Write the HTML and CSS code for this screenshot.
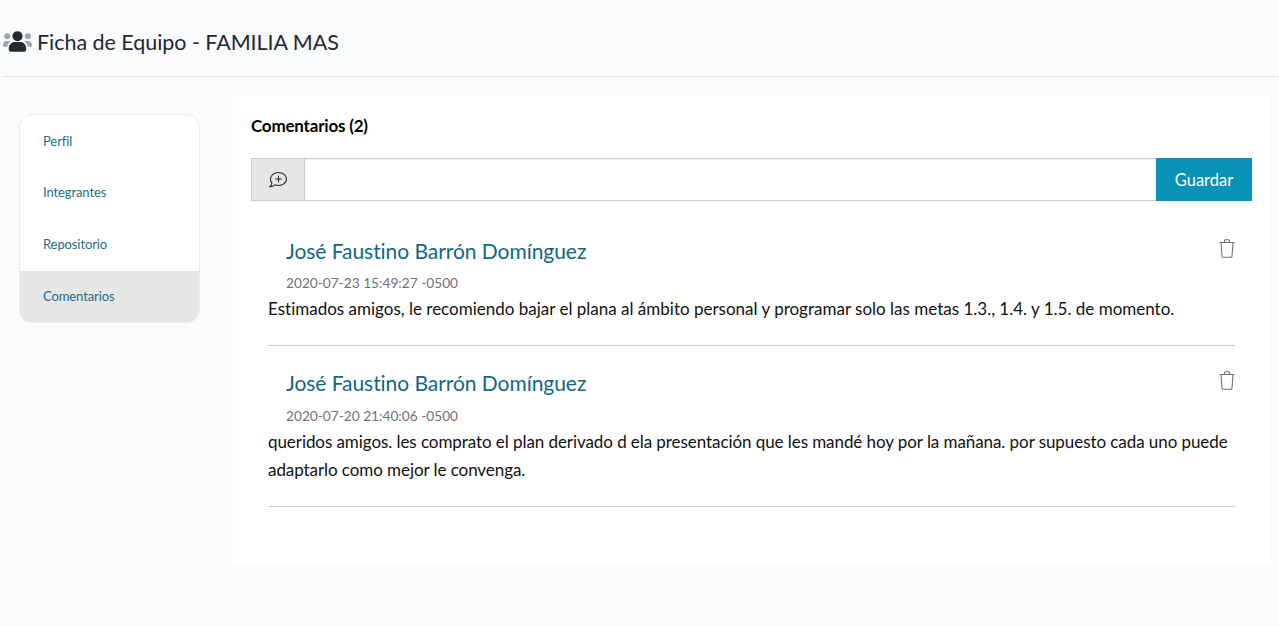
FILE: index.html
```html
<!DOCTYPE html>
<html lang="es">
<head>
<meta charset="utf-8">
<title>Ficha de Equipo</title>
<link rel="stylesheet" href="styles.css">
</head>
<body>
<header class="page-header">
  <svg class="team-icon" width="31" height="23" viewBox="0 0 32 23" aria-hidden="true">
    <g fill="#a3a5a8">
      <circle cx="5.300" cy="6" r="3.100"/>
      <circle cx="26.700" cy="6" r="3.100"/>
      <path d="M1 16c0-3 1.500-5 4-5h2.500c.6 0 1.200.2 1.700.5C6.900 12.800 5.600 14.800 5.400 17H2c-.6 0-1-.4-1-1z"/>
      <path transform="matrix(-1 0 0 1 32 0)" d="M1 16c0-3 1.500-5 4-5h2.500c.6 0 1.200.2 1.700.5C6.900 12.800 5.600 14.800 5.400 17H2c-.6 0-1-.4-1-1z"/>
    </g>
    <g fill="#24292f">
      <circle cx="16" cy="6" r="5.200"/>
      <path d="M7 19c0-4.500 3-7 6-7h6c3 0 6 2.500 6 7v1c0 1.100-.9 2-2 2H9c-1.100 0-2-.9-2-2z"/>
    </g>
  </svg>
  <h1 class="page-title">Ficha de Equipo - FAMILIA MAS</h1>
</header>
<div class="layout">
  <nav class="side-nav">
    <a class="side-link" href="#">Perfil</a>
    <a class="side-link" href="#">Integrantes</a>
    <a class="side-link" href="#">Repositorio</a>
    <a class="side-link active" href="#">Comentarios</a>
  </nav>
  <main class="panel">
    <h2 class="panel-title">Comentarios (2)</h2>
    <form class="comment-form">
      <span class="addon">
        <svg width="20" height="18" viewBox="0 0 20 18" fill="none" stroke="#24292f" stroke-width="1.100" aria-hidden="true">
          <path d="M10.500 1.500c4.400 0 8 2.900 8 6.500s-3.600 6.500-8 6.500c-1.300 0-2.500-.3-3.600-.7-1 .9-2.700 1.900-5 1.900 1.100-1 1.800-2.200 2-3.700C2.900 11.300 2.500 9.700 2.500 8c0-3.600 3.600-6.500 8-6.500z"/>
          <path d="M10.500 4.800v6.400M7.300 8h6.400"/>
        </svg>
      </span>
      <input class="comment-input" type="text" aria-label="Comentario">
      <button class="save-btn" type="button">Guardar</button>
    </form>
    <article class="comment">
      <div class="comment-head">
        <div>
          <h3 class="author">José Faustino Barrón Domínguez</h3>
          <div class="stamp">2020-07-23 15:49:27 -0500</div>
        </div>
        <svg class="trash" width="16" height="19" viewBox="0 0 16 19" fill="none" stroke="#6f7275" stroke-width="1.100" aria-hidden="true">
          <path d="M.5 3.500h15M5.500 3.500V1.700c0-.6.4-1 1-1h3c.6 0 1 .4 1 1v1.800M2 3.500l1 13.500c0 .8.600 1.300 1.300 1.300h7.400c.7 0 1.300-.5 1.300-1.300l1-13.500"/>
        </svg>
      </div>
      <p class="comment-body">Estimados amigos, le recomiendo bajar el plana al ámbito personal y programar solo las metas 1.3., 1.4. y 1.5. de momento.</p>
    </article>
    <article class="comment">
      <div class="comment-head">
        <div>
          <h3 class="author">José Faustino Barrón Domínguez</h3>
          <div class="stamp">2020-07-20 21:40:06 -0500</div>
        </div>
        <svg class="trash" width="16" height="19" viewBox="0 0 16 19" fill="none" stroke="#6f7275" stroke-width="1.100" aria-hidden="true">
          <path d="M.5 3.500h15M5.500 3.500V1.700c0-.6.4-1 1-1h3c.6 0 1 .4 1 1v1.800M2 3.500l1 13.500c0 .8.600 1.300 1.300 1.300h7.400c.7 0 1.300-.5 1.300-1.300l1-13.500"/>
        </svg>
      </div>
      <p class="comment-body comment-body-tight">queridos amigos. les comprato el plan derivado d ela presentación que les mandé hoy por la mañana. por supuesto cada uno puede adaptarlo como mejor le convenga.</p>
    </article>
  </main>
</div>
</body>
</html>
```
FILE: styles.css
```css
* { box-sizing: border-box; }
html, body { margin: 0; height: 100%; }
body {
  background: #f9fbfd;
  color: #111;
  font-family: "Lato", "Liberation Sans", sans-serif;
  font-variant-ligatures: none;
  overflow: hidden;
}
.page-header {
  display: flex;
  align-items: center;
  gap: 4px;
  height: 77px;
  margin-left: 3px;
  padding-top: 7px;
  border-bottom: 1px solid #e3e5e8;
}
.team-icon { flex: none; margin-left: -1px; }
.page-title {
  margin: 0;
  font-size: 21.500px;
  letter-spacing: -.04px;
  font-weight: 400;
  color: #24292f;
  white-space: nowrap;
}
.layout {
  display: flex;
  align-items: flex-start;
  padding: 18px 9px 0 19px;
  gap: 33px;
}
.side-nav {
  flex: none;
  width: 181px;
  margin-top: 19px;
  display: flex;
  flex-direction: column;
  background: #fff;
  border: 1px solid #e9ebee;
  border-radius: 13px;
  overflow: hidden;
}
.side-link {
  display: flex;
  align-items: center;
  height: 52px;
  padding: 0 0 3px 23px;
  font-size: 13px;
  letter-spacing: -.1px;
  color: #1b6f8a;
  text-decoration: none;
}
.side-link:first-child { padding-bottom: 1px; }
.side-link.active { background: #e6e6e6; height: 51px; padding-bottom: 1px; }
.panel {
  flex: 1;
  height: 469px;
  background: #fff;
  padding: 19px 18px 0;
}
.panel-title {
  margin: 0 0 21px;
  height: 23px;
  line-height: 23px;
  font-size: 17px;
  letter-spacing: -.2px;
  font-weight: 700;
  color: #000;
}
.comment-form { display: flex; height: 43px; margin-bottom: 34px; }
.addon {
  flex: none;
  width: 54px;
  display: flex;
  align-items: center;
  justify-content: center;
  background: #e6e6e6;
  border: 1px solid #cbcbcb;
}
.comment-input {
  flex: 1;
  min-width: 0;
  border: 1px solid #cbcbcb;
  border-left: 0;
  border-right: 0;
  background: #fff;
  box-shadow: inset 0 1px 1px rgba(0,0,0,.05);
}
.save-btn {
  flex: none;
  width: 96px;
  border: 0;
  background: #0792b6;
  color: #fff;
  font-family: inherit;
  font-size: 16.500px;
}
.comment {
  margin: 0 17px;
  padding-bottom: 22px;
  border-bottom: 1px solid #c9c9c9;
}
.comment + .comment { margin-top: 21px; }
.comment + .comment .stamp { margin-top: 7px; }
.comment-head {
  display: flex;
  justify-content: space-between;
  align-items: flex-start;
  padding-left: 18px;
}
.author {
  margin: 0;
  font-size: 21px;
  letter-spacing: -.05px;
  line-height: 32px;
  font-weight: 400;
  color: #13677f;
}
.stamp {
  margin-top: 6px;
  font-size: 13.700px;
  line-height: 20px;
  color: #6f7275;
}
.trash { margin-top: 4px; }
.comment-body {
  margin: 2px 0 0;
  font-size: 17px;
  line-height: 28px;
  color: #111;
}
.comment-body-tight { letter-spacing: -.07px; }
```
